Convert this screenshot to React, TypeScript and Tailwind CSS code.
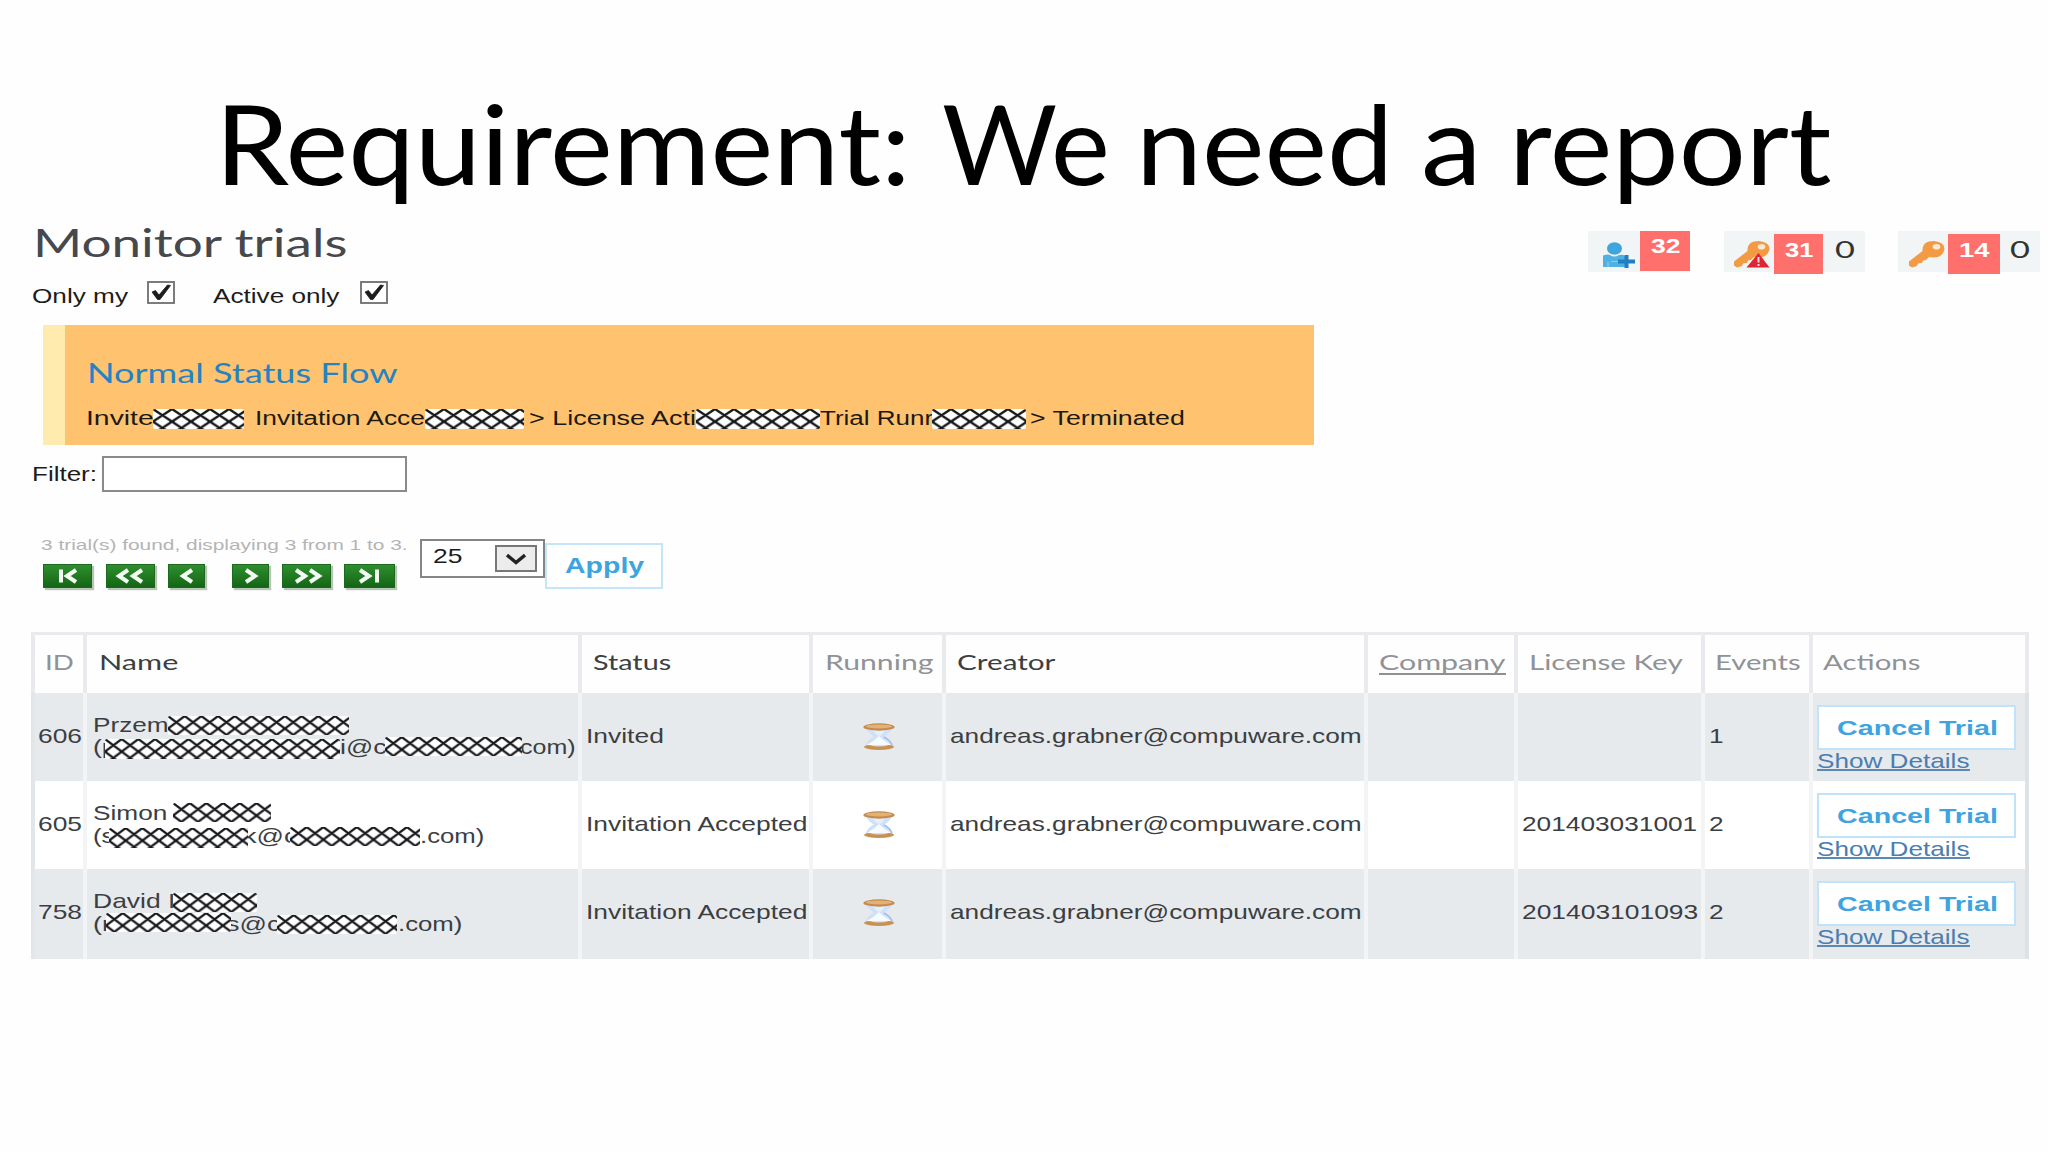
import { useId, useLayoutEffect, useRef, useState } from 'react';
import type { ReactNode } from 'react';
import clsx from 'clsx';

interface FitProps {
  className?: string;
  children: ReactNode;
}

// One line of text, stretched horizontally to fill the box's width
function Fit({ className, children }: FitProps) {
  const box = useRef<HTMLSpanElement>(null);
  const text = useRef<HTMLSpanElement>(null);
  const [scale, setScale] = useState(1);

  useLayoutEffect(() => {
    if (box.current && text.current) {
      setScale(box.current.clientWidth / text.current.offsetWidth);
    }
  }, []);

  return (
    <span ref={box} className={clsx('block flex-shrink-0', className)}>
      <span
        ref={text}
        className="inline-block origin-left whitespace-pre align-top"
        style={{ transform: `scaleX(${scale})` }}
      >
        {children}
      </span>
    </span>
  );
}

// Cross-hatched strip over private text
function Hatch({ className, period = 16.7 }: { className?: string; period?: number }) {
  const id = useId();
  return (
    <svg className={clsx('block relative z-10 flex-shrink-0', className)}>
      <pattern
        id={id}
        width="16.7"
        height="12.6"
        patternUnits="userSpaceOnUse"
        patternTransform={`scale(${period / 16.7} 1)`}
      >
        <rect width="16.7" height="12.6" fill="#fff" />
        <path
          d="M-1.67 -1.26L18.37 13.86M18.37 -1.26L-1.67 13.86M-1.67 11.34L1.67 13.86M15.03 13.86L18.37 11.34M-1.67 1.26L1.67 -1.26M15.03 -1.26L18.37 1.26"
          stroke="#15161a"
          strokeWidth="2.2"
        />
      </pattern>
      <rect width="100%" height="100%" rx="2" fill={`url(#${id})`} />
    </svg>
  );
}

function Checkbox() {
  return (
    <svg className="block h-[23px] w-[28px]" viewBox="0 0 28 23">
      <rect x="1" y="1" width="26" height="21" fill="#fff" stroke="#6e6e6e" strokeWidth="1.8" />
      <path d="M5 11L8.5 9.5L12 14L20.5 4L23.5 4.5L13 18.5H10.5Z" fill="#1c1c1c" stroke="#1c1c1c" strokeWidth="0.8" />
    </svg>
  );
}

function UserIcon() {
  return (
    <svg className="block h-[26px] w-[33px]" viewBox="0 0 33 26">
      <ellipse cx="12.5" cy="6.5" rx="7.5" ry="6.2" fill="#3fa5de" />
      <path d="M1 13.5Q6 12 8 13Q12 16 17 13Q21 12 23 14V25H1Z" fill="#4fb0e3" />
      <path d="M6 20V25M9 19.5H19" stroke="#8fcdec" strokeWidth="1.2" />
      <path d="M24.5 13V26M16 19.5H33" stroke="#1f7fc0" strokeWidth="4" />
    </svg>
  );
}

function KeyIcon({ alert }: { alert?: boolean }) {
  return (
    <svg className="block h-[28px] w-[37px]" viewBox="0 0 37 28">
      <path
        d="M14.5 11Q14 1 26 1Q36.5 2 36.5 9Q35 17.5 25 17.5L21 17L18 20L15 20.5L14 23L10 23.5L9 26L4 27.5L1 25.5V21.5Z"
        fill="#f39a45"
      />
      <ellipse cx="28.5" cy="6.8" rx="3.8" ry="2.8" fill="#fde8d2" />
      {alert && (
        <>
          <path d="M25.5 13L36.5 27.5H13.5Z" fill="#dc2633" />
          <path d="M25.5 17V22.5M25.5 24V26" stroke="#fbd5d7" strokeWidth="2" />
        </>
      )}
    </svg>
  );
}

function Hourglass() {
  return (
    <svg className="block h-[27px] w-[32px]" viewBox="0 0 32 27">
      <path d="M3 5H29Q28 9 21.5 13.5Q28 17 30 24H2Q4 17 10.5 13.5Q4 9 3 5Z" fill="#cfe1f8" />
      <path d="M8 6H24L17.5 12.5H14.5Z" fill="#e6f0fc" />
      <path d="M16 13L20.5 17L28 22H4L11.5 17Z" fill="#f7fbff" />
      <path d="M29 22Q27 17 21 14" fill="none" stroke="#9fbcec" strokeWidth="1.4" />
      <ellipse cx="16" cy="4" rx="15.7" ry="3.7" fill="#c58b4c" />
      <ellipse cx="16" cy="3.4" rx="13" ry="2" fill="#e2b177" />
      <path d="M0.5 24Q3 22 6 22Q16 25 26 22Q30 22 31.5 24Q28 27 16 27Q4 27 0.5 24Z" fill="#c99052" />
    </svg>
  );
}

const PAGER = [
  { key: 'first', box: 'w-[49px]', d: 'M17 6V19M32 6.5L23 12.5L32 18.5' },
  { key: 'rewind', box: 'ml-[14px] w-[49px]', d: 'M21 6.5L12 12.5L21 18.5M35 6.5L26 12.5L35 18.5' },
  { key: 'prev', box: 'ml-[13px] w-[37px]', d: 'M23 6.5L14 12.5L23 18.5' },
  { key: 'next', box: 'ml-[27px] w-[37px]', d: 'M13 6.5L22 12.5L13 18.5' },
  { key: 'forward', box: 'ml-[13px] w-[49px]', d: 'M13 6.5L22 12.5L13 18.5M27 6.5L36 12.5L27 18.5' },
  { key: 'last', box: 'ml-[13px] w-[51px]', d: 'M15 6.5L24 12.5L15 18.5M32 6V19' },
];

function Badges() {
  return (
    <div className="flex mt-[14px] h-[41px] text-[21px] leading-[24px] font-bold text-white font-['Liberation_Sans',sans-serif]">
      <div className="flex w-[102px] bg-[#f2f5f5]">
        <div className="pl-[14px] pt-[11px] w-[52px]">
          <UserIcon />
        </div>
        <div className="h-[40px] w-[50px] bg-[#ff706d] pl-[11px] pt-[3px]">
          <Fit className="w-[29px]">32</Fit>
        </div>
      </div>
      <div className="flex ml-[34px] w-[141px] bg-[#f2f5f5]">
        <div className="pl-[9px] pt-[9px] w-[50px]">
          <KeyIcon alert />
        </div>
        <div className="mt-[3px] h-[40px] w-[49px] bg-[#ff706d] pl-[11px] pt-[4px]">
          <Fit className="w-[28px]">31</Fit>
        </div>
        <Fit className="ml-[12px] mt-[6px] w-[20px] font-normal text-[24px] text-[#333] font-['Lato',sans-serif]">0</Fit>
      </div>
      <div className="flex ml-[33px] w-[142px] bg-[#f2f5f5]">
        <div className="pl-[10px] pt-[9px] w-[50px]">
          <KeyIcon />
        </div>
        <div className="mt-[3px] h-[40px] w-[52px] bg-[#ff706d] pl-[11px] pt-[4px]">
          <Fit className="w-[30px]">14</Fit>
        </div>
        <Fit className="ml-[10px] mt-[6px] w-[20px] font-normal text-[24px] text-[#333] font-['Lato',sans-serif]">0</Fit>
      </div>
    </div>
  );
}

function StatusFlow() {
  return (
    <div className="ml-[43px] mt-[13px] h-[120px] w-[1271px] bg-[#ffc26f] border-l-[22px] border-[#ffebad] pl-[22px] pt-[30px]">
      <Fit className="w-[311px] h-[36px] text-[26px] leading-[36px] text-[#2583c4] font-['Lato',sans-serif]">
        Normal Status Flow
      </Fit>
      <div className="flex mt-[15px] -ml-px text-[20px] leading-[24px] text-[#1c1a12]">
        <Fit className="w-[68px]">Invite</Fit>
        <Hatch className="-ml-px mt-[3px] h-[20px] w-[91px]" period={19} />
        <Fit className="ml-[11px] w-[170px]">Invitation Acce</Fit>
        <Hatch className="mt-[3px] h-[20px] w-[99px]" period={19} />
        <Fit className="ml-[5px] w-[167px]">&gt; License Acti</Fit>
        <Hatch className="mt-[3px] h-[20px] w-[124px]" period={19} />
        <Fit className="w-[113px]">Trial Runr</Fit>
        <Hatch className="-ml-px mt-[3px] h-[20px] w-[94px]" period={19} />
        <Fit className="ml-[4px] w-[155px]">&gt; Terminated</Fit>
      </div>
    </div>
  );
}

function Pager() {
  return (
    <div className="flex ml-[41px] mt-[47px] h-[52px]">
      <div className="w-[379px]">
        <Fit className="w-[366px] h-[16px] -mt-[2px] text-[15px] leading-[16px] text-[#b4b4b6]">
          3 trial(s) found, displaying 3 from 1 to 3.
        </Fit>
        <div className="flex ml-[2px] mt-[11px]">
          {PAGER.map((b) => (
            <button
              key={b.key}
              className={clsx(
                'h-[24px] bg-linear-to-b from-[#2f8f2f] to-[#146614] border border-[#1c6b1c] shadow-[2px_2px_1px_#b9c4b9]',
                b.box,
              )}
            >
              <svg className="block h-[22px] w-full overflow-visible">
                <path d={b.d} transform="translate(0 -1.5)" fill="none" stroke="#f4fbf4" strokeWidth="4" />
              </svg>
            </button>
          ))}
        </div>
      </div>
      <div className="flex h-[39px] w-[125px] border-2 border-[#858585] bg-white">
        <Fit className="ml-[11px] mt-[3px] w-[29px] text-[21px] leading-[24px] text-[#1c1c1c]">25</Fit>
        <div className="flex items-center justify-center ml-[33px] mt-[4px] h-[27px] w-[42px] border-2 border-[#777] bg-[#ececec]">
          <svg className="block h-[12px] w-[20px]" viewBox="0 0 20 12">
            <path d="M1 2L10 9.5L19 2" fill="none" stroke="#222" strokeWidth="3.4" />
          </svg>
        </div>
      </div>
      <button className="mt-[4px] h-[46px] w-[118px] border-2 border-[#c4e6f8] bg-white pl-[18px] font-bold text-[22px] leading-[24px] text-[#3ea4e0] text-left">
        <Fit className="w-[79px]">Apply</Fit>
      </button>
    </div>
  );
}

interface Trial {
  id: string;
  name: ReactNode;
  status: string;
  statusWidth: string;
  license?: string;
  licenseWidth?: string;
  events: string;
}

const TRIALS: Trial[] = [
  {
    id: '606',
    name: (
      <>
        <div className="flex h-[22px] mt-[19px]">
          <Fit className="w-[76px]">Przem</Fit>
          <Hatch className="-ml-px mt-[3px] h-[19px] w-[181px]" />
        </div>
        <div className="flex h-[22px]">
          <Fit className="w-[24px]">(p</Fit>
          <Hatch className="-ml-[12px] mt-[4px] h-[20px] w-[235px]" />
          <Fit className="w-[46px]">i@c</Fit>
          <Hatch className="-ml-px mt-[2px] h-[19px] w-[137px]" />
          <Fit className="-ml-[2px] w-[56px]">com)</Fit>
        </div>
      </>
    ),
    status: 'Invited',
    statusWidth: 'w-[78px]',
    events: '1',
  },
  {
    id: '605',
    name: (
      <>
        <div className="flex h-[23px] mt-[19px]">
          <Fit className="w-[75px]">Simon</Fit>
          <Hatch className="ml-[5px] mt-[2px] h-[19px] w-[98px]" />
        </div>
        <div className="flex h-[22px]">
          <Fit className="w-[22px]">(s</Fit>
          <Hatch className="-ml-[6px] mt-[4px] h-[20px] w-[139px]" />
          <Fit className="-ml-[5px] w-[54px]">k@c</Fit>
          <Hatch className="-ml-[7px] mt-[3px] h-[19px] w-[130px]" />
          <Fit className="w-[65px]">.com)</Fit>
        </div>
      </>
    ),
    status: 'Invitation Accepted',
    statusWidth: 'w-[221px]',
    license: '201403031001',
    licenseWidth: 'w-[175px]',
    events: '2',
  },
  {
    id: '758',
    name: (
      <>
        <div className="flex h-[23px] mt-[19px]">
          <Fit className="w-[82px]">David I</Fit>
          <Hatch className="-ml-[2px] mt-[4px] h-[19px] w-[84px]" />
        </div>
        <div className="flex h-[22px]">
          <Fit className="w-[18px]">(r</Fit>
          <Hatch className="-ml-[5px] mt-px h-[19px] w-[125px]" />
          <Fit className="-ml-[5px] w-[54px]">s@c</Fit>
          <Hatch className="-ml-[3px] mt-[3px] h-[19px] w-[120px]" />
          <Fit className="ml-px w-[65px]">.com)</Fit>
        </div>
      </>
    ),
    status: 'Invitation Accepted',
    statusWidth: 'w-[221px]',
    license: '201403101093',
    licenseWidth: 'w-[176px]',
    events: '2',
  },
];

const COLUMNS = [
  { label: 'ID', text: 'ml-[10px] w-[29px]', muted: true },
  { label: 'Name', text: 'ml-[12px] w-[80px]' },
  { label: 'Status', text: 'ml-[11px] w-[78px]' },
  { label: 'Running', text: 'ml-[12px] w-[109px]', muted: true },
  { label: 'Creator', text: 'ml-[11px] w-[99px]' },
  { label: 'Company', text: 'ml-[11px] w-[127px] h-[25px] border-b-2 border-[#8e9093]', muted: true },
  { label: 'License Key', text: 'ml-[11px] w-[154px]', muted: true },
  { label: 'Events', text: 'ml-[10px] w-[85px]', muted: true },
  { label: 'Actions', text: 'ml-[10px] w-[98px]', muted: true },
];

const GRID = 'grid grid-cols-[52px_495px_231px_133px_422px_150px_187px_108px_216px] border-r-4';

function TrialTable() {
  return (
    <div className="ml-[31px] mt-[41px] w-[1998px] text-[#3b3e42] text-[21px] leading-[24px]">
      <div className={clsx(GRID, 'border-[#e8eaed] border-t-[3px] h-[61px]')}>
        {COLUMNS.map((c) => (
          <div
            key={c.label}
            className={clsx(
              "border-l-4 border-[#e8eaed] pt-[15px] font-['Lato',sans-serif]",
              c.muted && 'text-[#909296]',
            )}
          >
            <Fit className={c.text}>{c.label}</Fit>
          </div>
        ))}
      </div>
      {TRIALS.map((t, i) => (
        <div
          key={t.id}
          className={clsx(
            GRID,
            'border-[#dfe2e5]',
            i % 2 === 0 ? 'bg-[#e7eaed]' : 'bg-white',
            i === 2 ? 'h-[90px]' : 'h-[88px]',
          )}
        >
          <div className="border-l-4 border-[#e3e6e9] pt-[31px]">
            <Fit className="ml-[3px] w-[44px]">{t.id}</Fit>
          </div>
          <div className="flex flex-col border-l-4 border-[#f2f4f6] pl-[6px] pt-px">{t.name}</div>
          <div className="border-l-4 border-[#f2f4f6] pt-[31px] pl-[4px]">
            <Fit className={t.statusWidth}>{t.status}</Fit>
          </div>
          <div className="border-l-4 border-[#f2f4f6] pt-[30px] pl-[50px]">
            <Hourglass />
          </div>
          <div className="border-l-4 border-[#f2f4f6] pt-[31px] pl-[4px]">
            <Fit className="w-[411px]">andreas.grabner@compuware.com</Fit>
          </div>
          <div className="border-l-4 border-[#f2f4f6]" />
          <div className="border-l-4 border-[#f2f4f6] pt-[31px] pl-[4px]">
            {t.license && <Fit className={t.licenseWidth}>{t.license}</Fit>}
          </div>
          <div className="border-l-4 border-[#f2f4f6] pt-[31px] pl-[4px]">
            <Fit className="w-[15px]">{t.events}</Fit>
          </div>
          <div className="border-l-4 border-[#f2f4f6] pt-[12px] pl-[4px]">
            <button className="block h-[45px] w-[199px] border-2 border-[#bfe3f8] bg-white pl-[18px] font-bold text-left text-[#3ea4e0]">
              <Fit className="w-[161px]">Cancel Trial</Fit>
            </button>
            <Fit className="w-[153px] h-[21px] leading-[22px] text-[#4a7db0] border-b-2 border-[#5c88b4]">
              Show Details
            </Fit>
          </div>
        </div>
      ))}
    </div>
  );
}

export default function App() {
  return (
    <div className="h-[1152px] w-[2048px] overflow-hidden bg-[#fefefe] pt-[82px] font-['Liberation_Sans',Arial,sans-serif]">
      <h1 className="flex pl-[215px] h-[120px] text-[110px] leading-[120px] text-black font-['Lato',sans-serif]">
        <Fit className="w-[696px]">Requirement:</Fit>
        <Fit className="ml-[31px] w-[168px]">We</Fit>
        <Fit className="ml-[26px] w-[257px]">need</Fit>
        <Fit className="ml-[28px] w-[61px]">a</Fit>
        <Fit className="ml-[27px] w-[322px]">report</Fit>
      </h1>

      {/* Page heading and counters */}
      <div className="flex justify-between h-[55px] mt-[15px] pl-[33px] pr-[8px]">
        <Fit className="mt-px w-[314px] text-[38px] leading-[48px] text-[#46484c] font-['Lato',sans-serif]">
          Monitor trials
        </Fit>
        <Badges />
      </div>

      <div className="flex h-[40px] pl-[32px] pt-[9px] text-[21px] leading-[24px] text-[#1c1c1c]">
        <Fit className="mt-[3px] w-[96px]">Only my</Fit>
        <div className="ml-[19px]">
          <Checkbox />
        </div>
        <Fit className="ml-[38px] mt-[3px] w-[127px]">Active only</Fit>
        <div className="ml-[20px]">
          <Checkbox />
        </div>
      </div>

      <StatusFlow />

      <div className="flex ml-[32px] mt-[11px] h-[36px] text-[20px] leading-[24px] text-[#1c1c1c]">
        <Fit className="mt-[6px] w-[65px]">Filter:</Fit>
        <div className="ml-[5px] w-[305px] border-2 border-[#8a8a8a] bg-white" />
      </div>

      <Pager />
      <TrialTable />
    </div>
  );
}
